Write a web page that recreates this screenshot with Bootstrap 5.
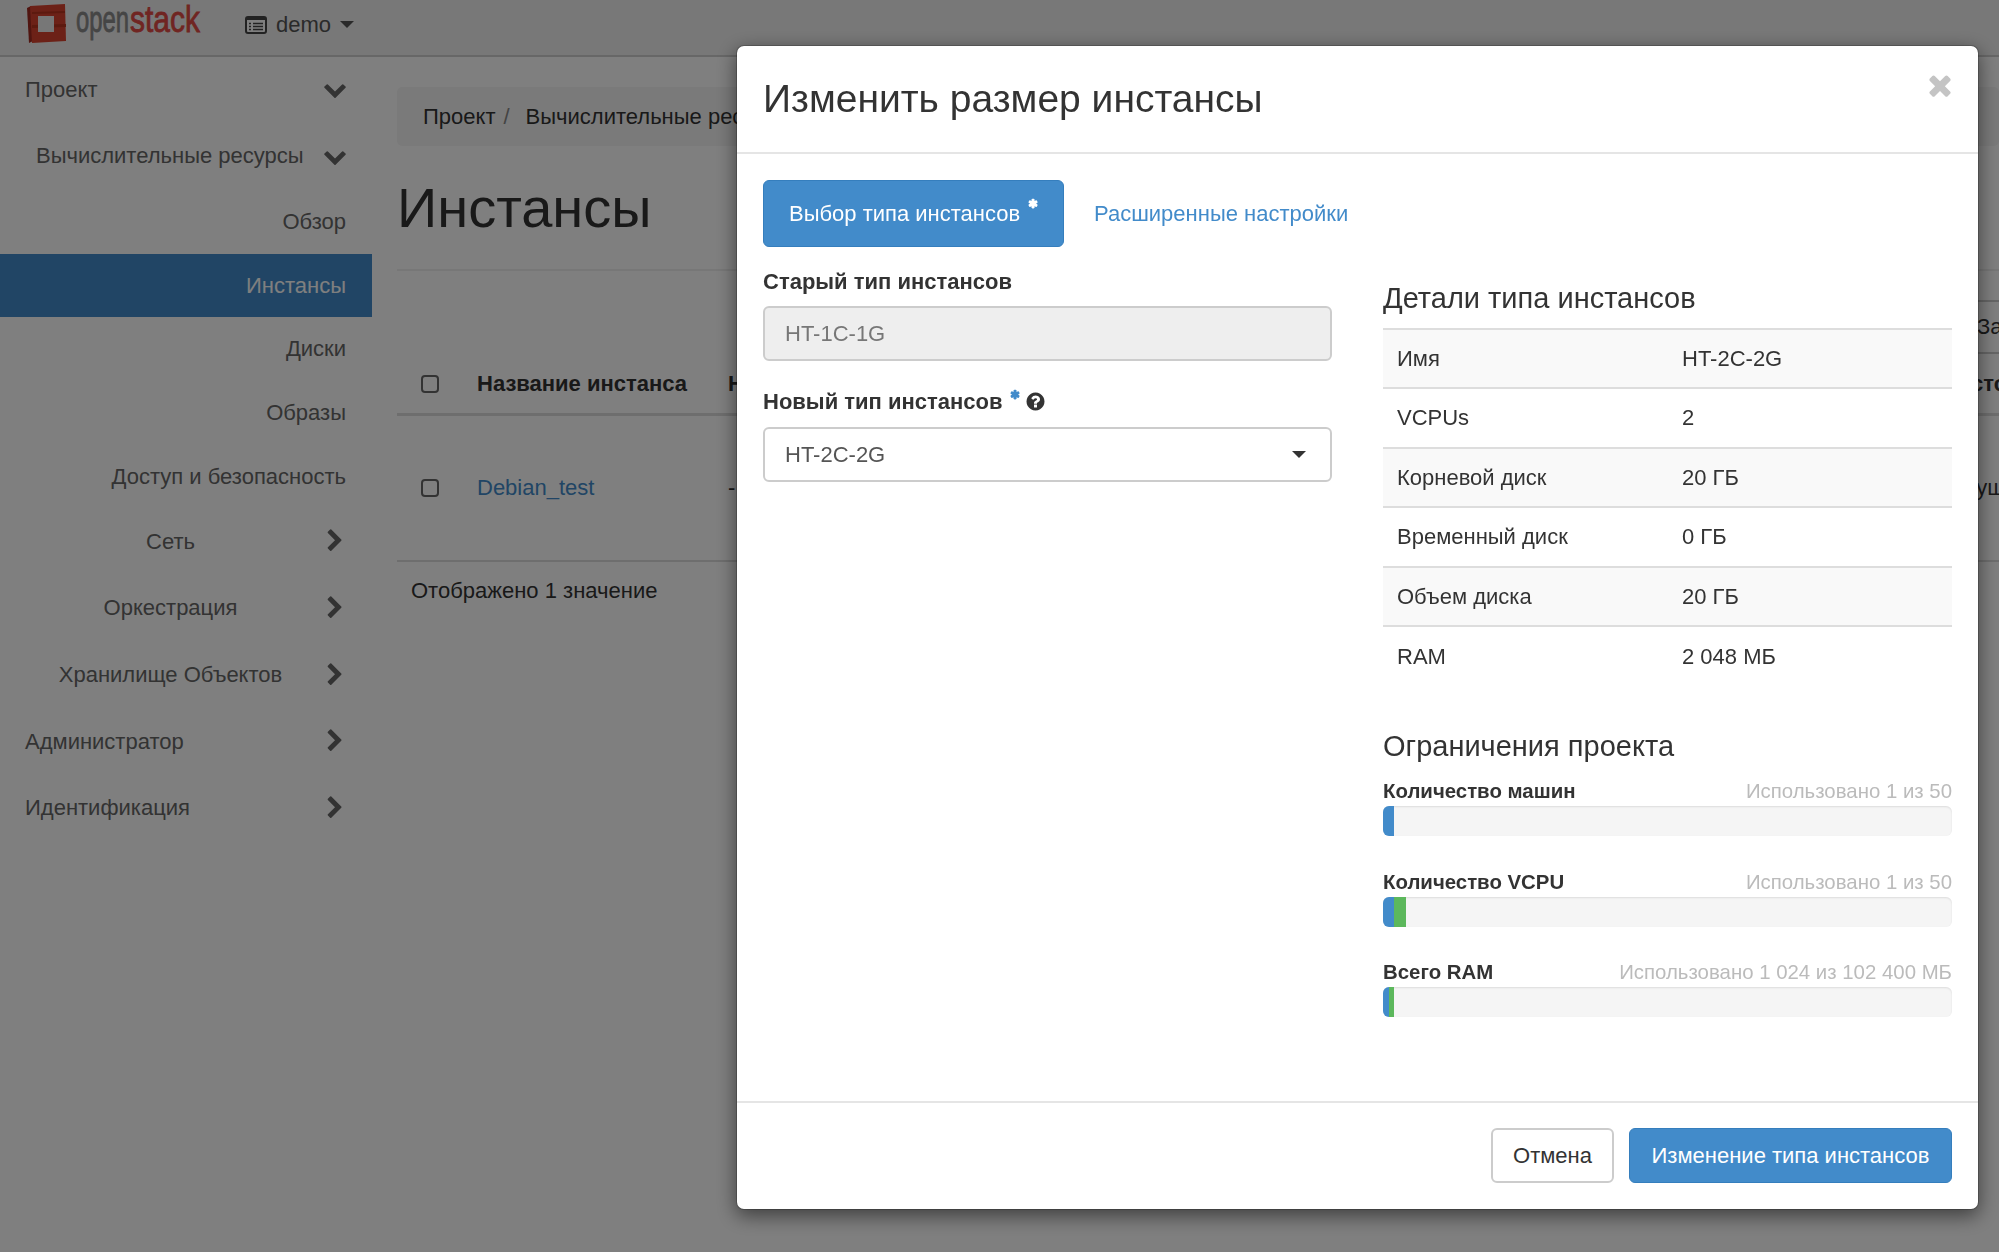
<!DOCTYPE html>
<html lang="ru"><head><meta charset="utf-8"><title>Инстансы</title>
<link rel="stylesheet" href="https://cdn.jsdelivr.net/npm/bootstrap@5.3.0/dist/css/bootstrap.min.css">
<style>
html,body{height:100%}
body{font-family:"Liberation Sans",Arial,sans-serif;color:#333;background:#fff;overflow:hidden;font-size:22px;line-height:1.43}
.os-page{height:1252px;display:flex;flex-direction:column;overflow:hidden}
.os-top{height:57px;background:#f0f0f0;border-bottom:2px solid #cfcfcf;padding:0 0 0 24px;gap:37px;flex:none}
.os-logo{display:block;align-self:flex-start}
.os-logo text{font-family:"Liberation Sans",sans-serif;font-size:36px;stroke-width:.8px}
.os-proj{color:#555;font-size:22px;gap:9px;margin-top:-5px}
.os-caret{width:0;height:0;border-left:7px solid transparent;border-right:7px solid transparent;border-top:7px solid currentColor;display:inline-block}
.os-side{width:372px;flex:none}
.os-navitem{height:66.6px;display:flex;align-items:center;color:#666;padding:0 25px;white-space:nowrap}
.os-navup{padding-bottom:2px}
.os-navsub{height:63.6px;justify-content:flex-end;padding-right:26px}
.os-navitem.os-active{background:#428bca;color:#fff}
.os-side svg{flex:none;fill:#666}
.os-navitem .os-grow{flex:1;text-align:center;padding-right:7px}
.os-sub1{padding-left:11px}
.os-main{flex:1;padding:30px 0 0 25px;min-width:0;overflow:hidden}
.os-crumb{height:59px;background:#f5f5f5;border-radius:5px;padding:0 26px;display:flex;align-items:center;gap:8px;white-space:nowrap}
.os-crumb .os-sl{color:#888;margin-right:8px}
.os-h1{font-size:56px;font-weight:400;color:#333;line-height:1;height:125px;padding-top:34px;margin:0;border-bottom:2px solid #eee}
.os-tool{height:83px;padding-top:29px;white-space:nowrap}
.os-hollow{height:54px;margin-left:1563px;border:2px solid #ccc;display:inline-flex;align-items:center;padding:0 15px;background:#fff;width:300px}
.os-rowh{height:62px;border-bottom:3px solid #ddd;display:flex;align-items:flex-end;padding-bottom:14px;font-weight:700;white-space:nowrap}
.os-rowd{height:146px;border-bottom:2px solid #ddd;display:flex;align-items:center;white-space:nowrap}
.os-cbx{width:18px;height:18px;border:2px solid #666;border-radius:4px;margin:0 38px 0 24px;flex:none;background:#fff}
.os-rowh .os-cbx{margin-bottom:6px}
.os-col1{width:251px;flex:none}
.os-col2{width:1214px;flex:none}
.os-link{color:#428bca;text-decoration:none}
.os-count{padding:13px 0 0 14px}
.modal.os-modal{display:block;overflow:hidden}
.os-modal .modal-dialog{max-width:none;width:1243px;margin:45px 0 0 736px}
.os-modal .modal-content{border:1px solid rgba(0,0,0,.2);border-radius:8px;box-shadow:0 6px 19px rgba(0,0,0,.5);height:1165px}
.os-modal .modal-header{height:108px;padding:0 25px 0 26px;border-bottom:2px solid #e5e5e5;align-items:center}
.os-title{font-size:39px;font-weight:400;color:#333;margin:0;line-height:1.2}
.os-x{position:absolute;right:22px;top:23px;fill:#c4c4c4}
.os-body{padding:26px 25px 0 26px;flex:1;display:flex;gap:51px}
.os-left{width:569px;flex:none}
.os-right{width:569px;flex:none;padding-top:100px}
.os-tabs{gap:30px;align-items:center;margin-bottom:23px;white-space:nowrap}
.os-tab{height:67px;width:301px;flex:none;border-radius:6px;background:#428bca;border:1px solid #357ebd;color:#fff;display:flex;align-items:center;padding-left:25px;text-decoration:none;white-space:nowrap}
.os-tabl{color:#428bca;text-decoration:none}
.os-star{vertical-align:top;position:relative;top:-11px;margin-left:5px;flex:none}
.os-lab{font-weight:700;margin:0 0 12px;display:block;color:#333;line-height:24px}
.os-lab + .os-in + .os-lab{margin-bottom:13px}
.os-lab .os-star{top:-3px;margin-left:4px}
.os-qmark{vertical-align:-3px;fill:#333;margin-left:-2px}
.os-in{height:55px;border:2px solid #ccc;border-radius:6px;font-size:22px;padding:0 20px;color:#555;background:#fff;margin-bottom:29px;box-shadow:none}
.os-in:disabled{background:#eee;color:#777;border-color:#ccc}
.os-sel-caret{color:#333;margin-right:4px}
.os-h4{font-size:29px;font-weight:400;color:#333;margin:0 0 12px;line-height:36px}
.os-dl{width:100%;border-top:2px solid #ddd;margin-bottom:42px}
.os-dr{height:59.4px;display:flex;align-items:center;border-bottom:2px solid #ddd;padding-left:14px;color:#333}
.os-dr:nth-child(odd){background:#f9f9f9}
.os-dr:last-child{border-bottom:0}
.os-dr span:first-child{width:285px;flex:none}
.os-qfirst{height:3px}
.os-qr{display:flex;justify-content:space-between;line-height:24px;font-weight:700;white-space:nowrap;font-size:20.4px}
.os-qr span{font-weight:400;color:#bbb}
.os-bar{height:30px;background:#f5f5f5;border-radius:6px;margin:3px 0 33.5px;display:flex;overflow:hidden;box-shadow:inset 0 1px 2px rgba(0,0,0,.1)}
.os-bar i{display:block}
.os-b1{background:#428bca}.os-b2{background:#5cb85c}
.os-foot{height:108px;border-top:2px solid #e5e5e5;padding:0 26px 2px 25px;display:flex;justify-content:flex-end;align-items:center;gap:15px}
.btn.os-btn{height:55px;display:flex;align-items:center;font-size:22px;border-radius:6px;padding:0;justify-content:center}
.btn.os-cancel{border:2px solid #ccc;background:#fff;color:#333;width:123px}
.btn.os-ok{border:1px solid #357ebd;background:#428bca;color:#fff;width:323px}
</style></head><body>
<svg class="d-none"><defs>
<symbol id="i-down" viewBox="0 0 1792 1792"><path d="M1683 808l-742 741q-19 19-45 19t-45-19l-742-741q-19-19-19-45.5t19-45.5l166-165q19-19 45-19t45 19l531 531 531-531q19-19 45-19t45 19l166 165q19 19 19 45.5t-19 45.5z"/></symbol>
<symbol id="i-right" viewBox="0 0 1792 1792"><path d="M1363 877l-742 742q-19 19-45 19t-45-19l-166-166q-19-19-19-45t19-45l531-531-531-531q-19-19-19-45t19-45l166-166q19-19 45-19t45 19l742 742q19 19 19 45t-19 45z"/></symbol>
<symbol id="i-q" viewBox="0 0 1792 1792"><path d="M1024 1376v-192q0-14-9-23t-23-9h-192q-14 0-23 9t-9 23v192q0 14 9 23t23 9h192q14 0 23-9t9-23zm256-672q0-88-55.5-163t-138.5-116-170-41q-243 0-371 213-15 24 8 42l132 100q7 6 19 6 16 0 25-12 53-68 86-92 34-24 86-24 48 0 85.5 26t37.5 59q0 38-20 61t-68 45q-63 28-115.5 86.5t-52.5 125.5v36q0 14 9 23t23 9h192q14 0 23-9t9-23q0-19 21.5-49.5t54.5-49.5q32-18 49-28.5t46-35 44.5-48 28-60.5 12.5-81zm384 192q0 209-103 385.5t-279.5 279.5-385.5 103-385.5-103-279.5-279.5-103-385.5 103-385.5 279.5-279.5 385.5-103 385.5 103 279.5 279.5 103 385.5z"/></symbol>
<symbol id="i-x" viewBox="0 0 1792 1792"><path d="M1490 1322q0 40-28 68l-136 136q-28 28-68 28t-68-28l-294-294-294 294q-28 28-68 28t-68-28l-136-136q-28-28-28-68t28-68l294-294-294-294q-28-28-28-68t28-68l136-136q28-28 68-28t68 28l294 294 294-294q28-28 68-28t68 28l136 136q28 28 28 68t-28 68l-294 294 294 294q28 28 28 68z"/></symbol>
<symbol id="i-s" viewBox="0 0 1792 1792"><path d="M1546 1050q46 26 59.5 77.5t-12.5 97.5l-64 110q-26 46-77.5 59.5t-97.5-12.5l-133-77v154q0 52-38 90t-90 38h-128q-52 0-90-38t-38-90v-154l-133 77q-46 26-97.5 12.5t-77.5-59.5l-64-110q-26-46-12.5-97.5t59.5-77.5l133-77-133-77q-46-26-59.5-77.5t12.5-97.5l64-110q26-46 77.5-59.5t97.5 12.5l133 77v-154q0-52 38-90t90-38h128q52 0 90 38t38 90v154l133-77q46-26 97.5-12.5t77.5 59.5l64 110q26 46 12.5 97.5t-59.5 77.5l-133 77z"/></symbol>
</defs></svg>

<div class="os-page">
<nav class="os-top d-flex align-items-center">
<svg class="os-logo" width="184" height="46" viewBox="0 0 184 46">
<path fill="#a02a20" d="M3 8 7 6 9 41 5 43Z"/><path fill="#d8432f" d="M6 6 41 4 42 41 8 43Z"/><path fill="#b8341f" d="M8 25 42 24 42 27 8 28ZM8 12 41 11 41 13 8 14Z"/><rect x="14" y="16" width="16" height="16" fill="#eee"/>
<text x="52" y="32" textLength="53" lengthAdjust="spacingAndGlyphs" fill="#8a8a8a" stroke="#8a8a8a">open</text>
<text x="106" y="32" textLength="70" lengthAdjust="spacingAndGlyphs" fill="#e04a44" stroke="#e04a44">stack</text>
</svg>
<div class="os-proj d-flex align-items-center">
<svg width="22" height="18" viewBox="0 0 22 18"><rect x="1" y="1" width="20" height="16" rx="2" fill="#fff" stroke="#444" stroke-width="2"/><rect x="1" y="1" width="20" height="3" fill="#444"/><path d="M4 7.5h2M8 7.5h10M4 10.5h2M8 10.5h10M4 13.5h2M8 13.5h10" stroke="#444" stroke-width="1.6"/></svg>
<span>demo</span><span class="os-caret"></span>
</div>
</nav>
<div class="d-flex flex-grow-1 os-wrap">
<aside class="os-side">
<div class="os-navitem os-navup"><span class="flex-grow-1">Проект</span><svg width="24" height="24"><use href="#i-down"/></svg></div>
<div class="os-navitem os-navup"><span class="flex-grow-1 os-sub1">Вычислительные ресурсы</span><svg width="24" height="24"><use href="#i-down"/></svg></div>
<div class="os-navitem os-navsub">Обзор</div>
<div class="os-navitem os-navsub os-active">Инстансы</div>
<div class="os-navitem os-navsub">Диски</div>
<div class="os-navitem os-navsub">Образы</div>
<div class="os-navitem os-navsub">Доступ и безопасность</div>
<div class="os-navitem"><span class="os-grow">Сеть</span><svg width="24" height="24"><use href="#i-right"/></svg></div>
<div class="os-navitem"><span class="os-grow">Оркестрация</span><svg width="24" height="24"><use href="#i-right"/></svg></div>
<div class="os-navitem"><span class="os-grow">Хранилище Объектов</span><svg width="24" height="24"><use href="#i-right"/></svg></div>
<div class="os-navitem"><span class="flex-grow-1">Администратор</span><svg width="24" height="24"><use href="#i-right"/></svg></div>
<div class="os-navitem"><span class="flex-grow-1">Идентификация</span><svg width="24" height="24"><use href="#i-right"/></svg></div>
</aside>
<main class="os-main">
<div class="os-crumb"><span>Проект</span><span class="os-sl">/</span><span>Вычислительные ресурсы</span></div>
<h1 class="os-h1">Инстансы</h1>
<div class="os-tool"><span class="os-hollow">Запустить инстанс</span></div>
<div class="os-rowh"><span class="os-cbx"></span><span class="os-col1">Название инстанса</span><span class="os-col2">Название образа</span><span>Состояние</span></div>
<div class="os-rowd"><span class="os-cbx"></span><span class="os-col1"><a class="os-link" href="#">Debian_test</a></span><span class="os-col2">-</span><span>Текущий</span></div>
<div class="os-count">Отображено 1 значение</div>
</main>
</div>
</div>

<div class="modal-backdrop show"></div>
<div class="modal os-modal" tabindex="-1">
<div class="modal-dialog">
<div class="modal-content">
<div class="modal-header">
<h3 class="os-title">Изменить размер инстансы</h3>
<svg class="os-x" width="32" height="32"><use href="#i-x"/></svg>
</div>
<div class="os-body">
<div class="os-left">
<div class="d-flex os-tabs">
<a class="os-tab" href="#">Выбор типа инстансов<svg class="os-star" width="14" height="14" fill="#fff"><use href="#i-s"/></svg></a>
<a class="os-tabl" href="#">Расширенные настройки</a>
</div>
<label class="os-lab">Старый тип инстансов</label>
<input class="form-control os-in" disabled value="HT-1C-1G">
<label class="os-lab">Новый тип инстансов<svg class="os-star" width="14" height="14" fill="#428bca"><use href="#i-s"/></svg> <svg class="os-qmark" width="21" height="21"><use href="#i-q"/></svg></label>
<div class="form-control os-in d-flex align-items-center justify-content-between">HT-2C-2G<span class="os-caret os-sel-caret"></span></div>
</div>
<div class="os-right">
<h4 class="os-h4">Детали типа инстансов</h4>
<div class="os-dl">
<div class="os-dr"><span>Имя</span><span>HT-2C-2G</span></div>
<div class="os-dr"><span>VCPUs</span><span>2</span></div>
<div class="os-dr"><span>Корневой диск</span><span>20 ГБ</span></div>
<div class="os-dr"><span>Временный диск</span><span>0 ГБ</span></div>
<div class="os-dr"><span>Объем диска</span><span>20 ГБ</span></div>
<div class="os-dr"><span>RAM</span><span>2 048 МБ</span></div>
</div>
<h4 class="os-h4">Ограничения проекта</h4>
<div class="os-qfirst"></div>
<div class="os-qr">Количество машин<span>Использовано 1 из 50</span></div>
<div class="os-bar"><i class="os-b1" style="width:2%"></i></div>
<div class="os-qr">Количество VCPU<span>Использовано 1 из 50</span></div>
<div class="os-bar"><i class="os-b1" style="width:2%"></i><i class="os-b2" style="width:2%"></i></div>
<div class="os-qr">Всего RAM<span>Использовано 1 024 из 102 400 МБ</span></div>
<div class="os-bar"><i class="os-b1" style="width:1%"></i><i class="os-b2" style="width:1%"></i></div>
</div>
</div>
<div class="os-foot">
<button class="btn os-btn os-cancel">Отмена</button>
<button class="btn os-btn os-ok">Изменение типа инстансов</button>
</div>
</div>
</div>
</div>
</body></html>
